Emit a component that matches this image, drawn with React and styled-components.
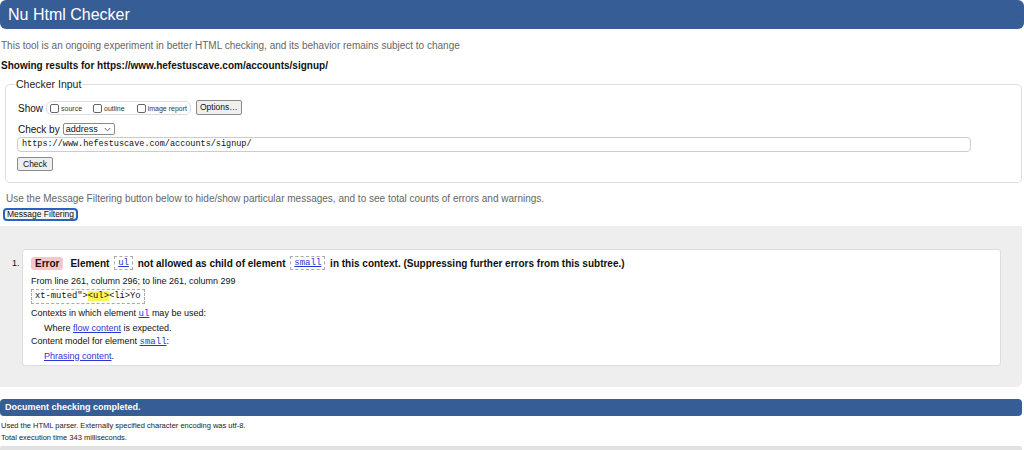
import React from 'react';
import styled, { createGlobalStyle } from 'styled-components';

const GlobalStyle = createGlobalStyle`
  html, body {
    margin: 0;
    padding: 0;
    background: #ffffff;
  }
  body {
    font-family: "Liberation Sans", Arial, sans-serif;
    color: #111;
  }
`;

const Page = styled.div`
  width: 1024px;
  height: 450px;
  overflow: hidden;
  display: flex;
  flex-direction: column;
`;

const TopBar = styled.h1`
  margin: 0;
  height: 29px;
  padding: 0 8px;
  background: #365d95;
  border-radius: 6px;
  color: #fff;
  font-size: 16px;
  font-weight: normal;
  line-height: 29px;
`;

const Intro = styled.p`
  margin: 10px 0 0 1px;
  font-size: 10px;
  line-height: 14px;
  color: #666;
`;

const Showing = styled.p`
  margin: 6px 0 0 1px;
  font-size: 10px;
  font-weight: bold;
  line-height: 14px;
`;

const Fieldset = styled.fieldset`
  margin: 4px 2px 0 5px;
  padding: 0 12px 11px;
  border: 1px solid #ddd;
  border-radius: 5px;
  min-width: 0;
`;

const Legend = styled.legend`
  margin-left: -3px;
  padding: 0 1px;
  font-size: 10.5px;
  line-height: 14px;
  color: #222;
`;

const Stack = styled.div`
  display: flex;
  flex-direction: column;
  padding-top: 9px;
`;

const ShowRow = styled.div`
  display: flex;
  align-items: center;
  height: 16px;
`;

const CheckByRow = styled.div`
  display: flex;
  align-items: center;
  height: 14px;
  margin-top: 6px;
`;

const Label = styled.span`
  font-size: 10px;
  margin-right: 3px;
`;

const CheckGroup = styled.div`
  display: flex;
  align-items: center;
  height: 14px;
  padding: 0 3px;
  border: 1px solid #ddd;
  border-radius: 6px;
  box-sizing: border-box;
  white-space: nowrap;
`;

const CheckItem = styled.label`
  display: flex;
  align-items: center;
  font-size: 7px;
  color: #333;
  margin-right: ${p => p.$gap}px;
`;

const Box = styled.span`
  display: inline-block;
  width: 7px;
  height: 7px;
  border: 1px solid #666;
  border-radius: 2px;
  margin-right: 2px;
  background: #fff;
`;

const SmallButton = styled.button`
  height: ${p => p.$h}px;
  padding: 0 ${p => p.$px}px;
  margin: 0 0 0 ${p => p.$ml}px;
  background: #efefef;
  border: 1px solid #8a8a8a;
  border-radius: 2px;
  font-family: "Liberation Sans", Arial, sans-serif;
  font-size: 8.5px;
  color: #111;
  line-height: 1;
  align-self: flex-start;
`;

const Select = styled.div`
  display: flex;
  align-items: center;
  justify-content: space-between;
  width: 52px;
  height: 12px;
  box-sizing: border-box;
  padding: 0 3px 0 2px;
  border: 1px solid #8a8a8a;
  border-radius: 2px;
  font-size: 9px;
  background: #fff;
`;

const UrlField = styled.div`
  margin: 1px 0 0 -1px;
  width: 954px;
  height: 15px;
  box-sizing: border-box;
  padding-left: 4px;
  border: 1px solid #ccc;
  border-radius: 4px;
  font-family: "Liberation Mono", "DejaVu Sans Mono", monospace;
  font-size: 8.5px;
  line-height: 13px;
  color: #111;
`;

const CheckRow = styled.div`
  margin: 5px 0 0 -1px;
  display: flex;
`;

const FilterNote = styled.p`
  margin: 9px 0 0 6px;
  font-size: 10px;
  line-height: 14px;
  color: #666;
`;

const FilterButton = styled.button`
  align-self: flex-start;
  margin: 2px 0 0 3px;
  height: 13px;
  width: 75px;
  padding: 0;
  border: 2px solid #2a62c0;
  border-radius: 4px;
  background: #f4f4f4;
  font-family: "Liberation Sans", Arial, sans-serif;
  font-size: 8.5px;
  line-height: 1;
  color: #111;
`;

const Results = styled.section`
  margin: 5px 2px 0 0;
  padding: 23px 0 21px;
  background: #eeeeee;
  border-radius: 0 0 6px 0;
`;

const Item = styled.div`
  display: flex;
`;

const ItemNum = styled.span`
  width: 22px;
  box-sizing: border-box;
  padding: 9px 0 0 12px;
  font-size: 9px;
`;

const MessageBox = styled.div`
  width: 979px;
  box-sizing: border-box;
  padding: 6px 8px 2px;
  background: #fff;
  border: 1px solid #ddd;
  border-radius: 3px;
`;

const ErrorLine = styled.div`
  display: flex;
  align-items: center;
  height: 14px;
  font-size: 10px;
  font-weight: bold;
  white-space: pre;
`;

const ErrorTag = styled.span`
  display: inline-flex;
  align-items: center;
  height: 13px;
  padding: 0 4px;
  margin-right: 7px;
  background: #f3c8c8;
  border-radius: 3px;
  color: #2a0a0a;
  font-size: 10px;
`;

const CodeRef = styled.a`
  display: inline-flex;
  align-items: center;
  height: ${p => (p.$boxed ? '14px' : 'auto')};
  padding: 0 ${p => (p.$boxed ? 3 : 0)}px;
  margin: 0 ${p => (p.$boxed ? 2 : 0)}px;
  border: ${p => (p.$boxed ? '1px dashed #aaa' : 'none')};
  box-sizing: border-box;
  font-family: "Liberation Mono", "DejaVu Sans Mono", monospace;
  font-size: 9px;
  font-weight: normal;
  color: #2a36d4;
  text-decoration: underline;
`;

const FromLine = styled.p`
  margin: 4px 0 0;
  font-size: 9px;
  line-height: 14px;
`;

const Extract = styled.div`
  display: inline-block;
  align-self: flex-start;
  margin-top: 1px;
  height: 15px;
  box-sizing: border-box;
  padding: 0 3px;
  border: 1px dashed #aaa;
  font-family: "Liberation Mono", "DejaVu Sans Mono", monospace;
  font-size: 8.8px;
  line-height: 13px;
`;

const Mark = styled.mark`
  background: #fbf553;
  color: inherit;
`;

const Detail = styled.div`
  display: flex;
  flex-direction: column;
  margin-top: 3px;
`;

const DetailLine = styled.p`
  margin: 0 0 0 ${p => (p.$indent ? 13 : 0)}px;
  font-size: 9px;
  line-height: 13.5px;
`;

const TextLink = styled.a`
  color: #2a36d4;
  text-decoration: underline;
`;

const MessageBody = styled.div`
  display: flex;
  flex-direction: column;
`;

const DoneBar = styled.div`
  margin: 12px 2px 0 0;
  height: 17px;
  padding-left: 5px;
  background: #365d95;
  border-radius: 4px;
  color: #fff;
  font-size: 9px;
  font-weight: bold;
  line-height: 17px;
`;

const Stats = styled.p`
  margin: ${p => p.$mt || 0}px 0 0 1px;
  font-size: 7.5px;
  line-height: 12px;
  color: #222;
`;

const BottomRule = styled.div`
  margin: 2px 2px 0 0;
  height: 4px;
  background: #e2e2e2;
  border-radius: 2px 2px 0 0;
`;

const Chevron = () => (
  <svg width="7" height="5" viewBox="0 0 7 5">
    <path d="M0.8 1 L3.5 3.8 L6.2 1" fill="none" stroke="#555" strokeWidth="0.9" />
  </svg>
);

export default function App() {
  return (
    <Page>
      <GlobalStyle />
      <TopBar>Nu Html Checker</TopBar>
      <Intro>This tool is an ongoing experiment in better HTML checking, and its behavior remains subject to change</Intro>
      <Showing>Showing results for https://www.hefestuscave.com/accounts/signup/</Showing>

      <Fieldset>
        <Legend>Checker Input</Legend>
        <Stack>
          <ShowRow>
            <Label>Show</Label>
            <CheckGroup>
              <CheckItem $gap={11}><Box />source</CheckItem>
              <CheckItem $gap={12}><Box />outline</CheckItem>
              <CheckItem $gap={0}><Box />image report</CheckItem>
            </CheckGroup>
            <SmallButton $h={15} $px={3} $ml={5}>Options…</SmallButton>
          </ShowRow>
          <CheckByRow>
            <Label>Check by</Label>
            <Select>address<Chevron /></Select>
          </CheckByRow>
          <UrlField>https://www.hefestuscave.com/accounts/signup/</UrlField>
          <CheckRow>
            <SmallButton $h={14} $px={5} $ml={0}>Check</SmallButton>
          </CheckRow>
        </Stack>
      </Fieldset>

      <FilterNote>Use the Message Filtering button below to hide/show particular messages, and to see total counts of errors and warnings.</FilterNote>
      <FilterButton>Message Filtering</FilterButton>

      <Results>
        <Item>
          <ItemNum>1.</ItemNum>
          <MessageBox>
            <MessageBody>
              <ErrorLine>
                <ErrorTag>Error</ErrorTag>
                Element <CodeRef $boxed>ul</CodeRef> not allowed as child of element <CodeRef $boxed>small</CodeRef> in this context. (Suppressing further errors from this subtree.)
              </ErrorLine>
              <FromLine>From line 261, column 296; to line 261, column 299</FromLine>
              <Extract>xt-muted"&gt;<Mark>&lt;ul&gt;</Mark>&lt;li&gt;Yo</Extract>
              <Detail>
                <DetailLine>Contexts in which element <CodeRef>ul</CodeRef> may be used:</DetailLine>
                <DetailLine $indent>Where <TextLink>flow content</TextLink> is expected.</DetailLine>
                <DetailLine>Content model for element <CodeRef>small</CodeRef>:</DetailLine>
                <DetailLine $indent><TextLink>Phrasing content</TextLink>.</DetailLine>
              </Detail>
            </MessageBody>
          </MessageBox>
        </Item>
      </Results>

      <DoneBar>Document checking completed.</DoneBar>
      <Stats $mt={4}>Used the HTML parser. Externally specified character encoding was utf-8.</Stats>
      <Stats>Total execution time 343 milliseconds.</Stats>
      <BottomRule />
    </Page>
  );
}
